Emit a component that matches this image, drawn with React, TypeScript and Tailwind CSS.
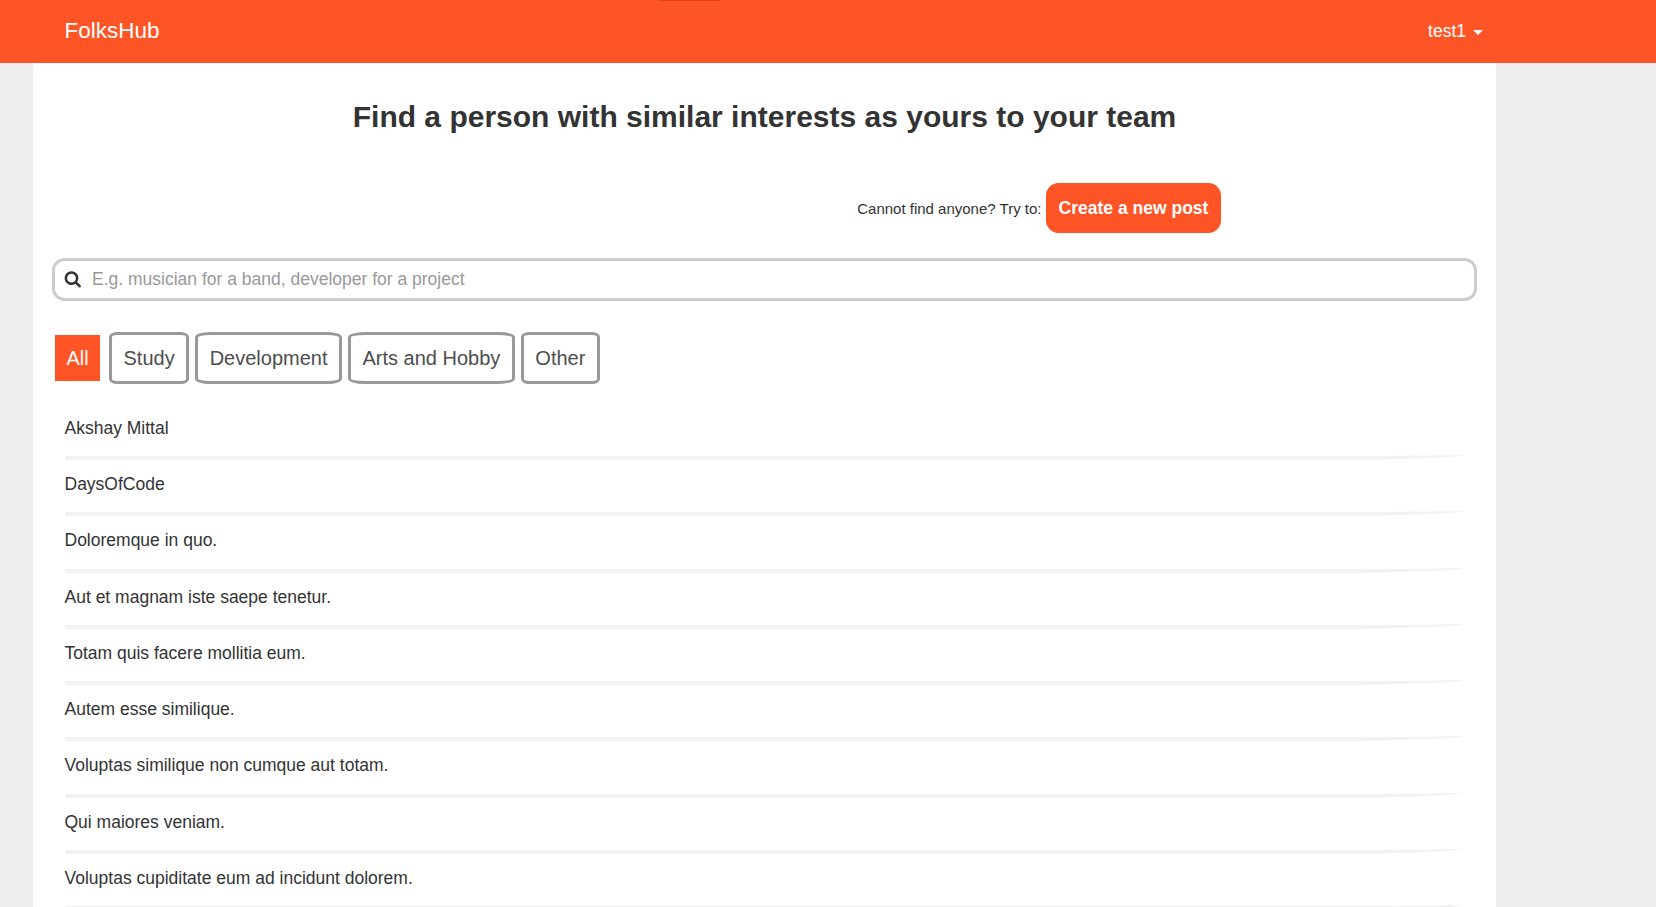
const posts = [
  "Akshay Mittal",
  "DaysOfCode",
  "Doloremque in quo.",
  "Aut et magnam iste saepe tenetur.",
  "Totam quis facere mollitia eum.",
  "Autem esse similique.",
  "Voluptas similique non cumque aut totam.",
  "Qui maiores veniam.",
  "Voluptas cupiditate eum ad incidunt dolorem.",
];

const categories = ["Study", "Development", "Arts and Hobby", "Other"];

function SearchIcon() {
  return (
    <svg viewBox="0 0 1792 1792" className="mb-[1px] h-[17.5px] w-[17.5px] shrink-0" fill="currentColor" aria-hidden="true">
      <path d="M1216 832q0-185-131.500-316.500t-316.500-131.500-316.500 131.500-131.500 316.500 131.500 316.500 316.500 131.500 316.500-131.500 131.500-316.500zm512 832q0 52-38 90t-90 38q-54 0-90-38l-343-342q-179 124-399 124-143 0-273.500-55.500t-225-150-150-225-55.500-273.500 55.500-273.500 150-225 225-150 273.500-55.500 273.500 55.500 225 150 150 225 55.500 273.500q0 220-124 399l343 343q37 37 37 90z" />
    </svg>
  );
}

function Navbar() {
  return (
    <nav className="relative flex h-[63px] items-center bg-[#ff5425] pl-[64.5px] text-white">
      <div className="absolute left-[660px] top-0 h-px w-[60px] bg-[#d9431c]" />
      <a className="text-[22.5px] leading-none">FolksHub</a>
      <button className="ml-auto mr-[173px] flex items-center text-[17.5px] leading-none">
        test1
        <span className="ml-[7px] mt-[2px] border-x-5 border-t-5 border-x-transparent border-t-white" />
      </button>
    </nav>
  );
}

export default function App() {
  return (
    <div className="h-[907px] overflow-hidden bg-[#efefef] font-['Liberation_Sans',Arial,sans-serif] text-[#333]">
      <Navbar />
      <main className="ml-[33px] h-[844px] w-[1463px] overflow-hidden bg-white px-[19px] pt-[36px]">
        <h1 className="text-center text-[30px] font-bold leading-[36px]">
          Find a person with similar interests as yours to your team
        </h1>
        <div className="mt-[48px] flex items-center justify-end pr-[256px]">
          <span className="mr-[4.5px] mt-[2px] text-[15px]">Cannot find anyone? Try to:</span>
          <button className="h-[50px] w-[175px] rounded-[12.5px] bg-[#ff5425] text-[17.5px] font-bold text-white">
            Create a new post
          </button>
        </div>
        <label className="mt-[25px] flex h-[43px] items-center rounded-[12.5px] border-3 border-[#ccc] pl-[9px]">
          <SearchIcon />
          <input
            className="ml-[10.5px] flex-1 text-[17.5px] outline-none placeholder:text-[#999]"
            placeholder="E.g. musician for a band, developer for a project"
          />
        </label>
        <div className="mt-[31px] flex items-center gap-[6px] pl-[3px] text-[20px] text-[#4d4d4d]">
          <button className="mr-[3px] h-[46px] w-[45px] bg-[#ff5425] text-white">All</button>
          {categories.map((name) => (
            <button key={name} className="h-[52px] rounded-[10%] border-3 border-[#999] px-[11.5px]">
              {name}
            </button>
          ))}
        </div>
        <ul className="ml-[12.5px] mt-[19.75px] w-[1399.5px] text-[17.5px]">
          {posts.map((post) => (
            <li
              key={post}
              className="h-[56.25px] rounded-br-[10%] border-b-4 border-[#f2f2f2] pt-[12px] leading-[25px]"
            >
              {post}
            </li>
          ))}
        </ul>
      </main>
    </div>
  );
}
